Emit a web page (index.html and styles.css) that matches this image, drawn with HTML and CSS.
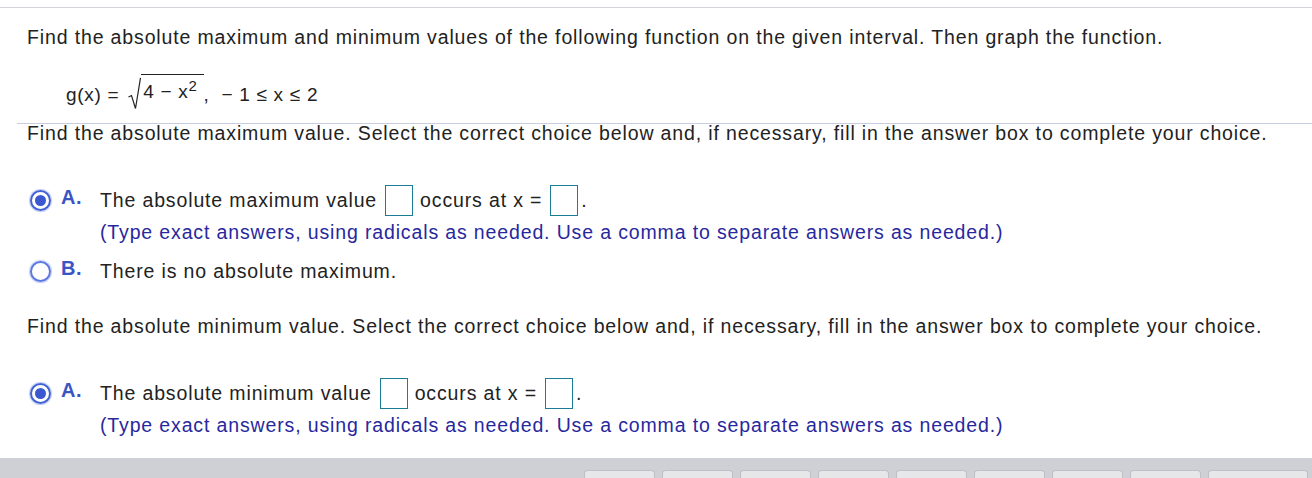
FILE: index.html
```html
<!DOCTYPE html>
<html>
<head>
<meta charset="utf-8">
<link rel="stylesheet" href="styles.css">
</head>
<body>
<div class="page">
  <div class="top-rule"></div>
  <p class="prompt">Find the absolute maximum and minimum values of the following function on the given interval. Then graph the function.</p>
  <div class="formula">g(x) =&nbsp;<svg class="radsign" width="13" height="33" viewBox="0 0 13 33"><path d="M0.5 20 L3.5 18.5 L7.5 31.5 L12.5 0.8" fill="none" stroke="#222" stroke-width="1.2"/></svg><span class="radicand">4 − x<sup>2</sup>&nbsp;</span>,&nbsp; − 1 ≤ x ≤ 2</div>
  <div class="part">
    <p class="instr">Find the absolute maximum value. Select the correct choice below and, if necessary, fill in the answer box to complete your choice.</p>
    <div class="choice first">
      <span class="radio checked"></span>
      <span class="label">A.</span>
      <span class="body">The absolute maximum value<span class="box"></span>occurs at x =<span class="box"></span>.</span>
    </div>
    <div class="hint">(Type exact answers, using radicals as needed. Use a comma to separate answers as needed.)</div>
    <div class="choice b">
      <span class="radio"></span>
      <span class="label">B.</span>
      <span class="body">There is no absolute maximum.</span>
    </div>
    <p class="instr second">Find the absolute minimum value. Select the correct choice below and, if necessary, fill in the answer box to complete your choice.</p>
    <div class="choice first">
      <span class="radio checked"></span>
      <span class="label">A.</span>
      <span class="body">The absolute minimum value<span class="box"></span>occurs at x =<span class="box"></span>.</span>
    </div>
    <div class="hint">(Type exact answers, using radicals as needed. Use a comma to separate answers as needed.)</div>
  </div>
  <div class="bottom-bar">
    <span class="tab"></span><span class="tab"></span><span class="tab"></span><span class="tab"></span><span class="tab"></span><span class="tab"></span><span class="tab"></span><span class="tab"></span><span class="tab wide"></span>
  </div>
</div>
</body>
</html>
```
FILE: styles.css
```css
html, body {
  margin: 0;
  padding: 0;
  background: #ffffff;
}
body {
  font-family: "Liberation Sans", Arial, sans-serif;
  color: #222222;
  width: 1312px;
  height: 478px;
  overflow: hidden;
}
.page {
  position: relative;
  box-sizing: border-box;
  height: 478px;
  padding-top: 7px;
}
.top-rule {
  height: 1px;
  background: #d4d4da;
}
.prompt {
  margin: 17px 0 0 27px;
  font-size: 19.5px;
  letter-spacing: 0.86px;
  line-height: 24px;
}
.formula {
  margin: 34px 0 0 66px;
  font-size: 19px;
  letter-spacing: 0.7px;
  line-height: 24px;
  height: 24px;
  display: flex;
  align-items: center;
  white-space: pre;
}
.radsign {
  display: block;
  margin-top: -4px;
  margin-left: 3px;
}
.radicand {
  display: inline-block;
  border-top: 1.2px solid #222;
  margin-top: -12px;
  padding-top: 5px;
  padding-left: 2px;
  line-height: 24px;
}
.radicand sup {
  font-size: 15px;
  vertical-align: 7px;
  line-height: 0;
}
.part {
  margin: 16px 0 0 17px;
  border-top: 1px solid #c8cde2;
}
.instr {
  margin: 0 0 0 10px;
  font-size: 19.5px;
  letter-spacing: 0.86px;
  line-height: 18px;
}
.instr.second {
  margin-top: 30px;
}
.choice {
  display: flex;
  align-items: center;
  height: 32px;
  font-size: 19.5px;
  letter-spacing: 0.86px;
}
.choice.first {
  margin-top: 42px;
}
.choice.b {
  margin-top: 7px;
}
.radio {
  box-sizing: border-box;
  width: 21px;
  height: 21px;
  margin-left: 13px;
  border: 2px solid #5a78e0;
  border-radius: 50%;
  box-shadow: 0 0 1px 1px rgba(120, 145, 230, 0.45);
  display: flex;
  align-items: center;
  justify-content: center;
  flex-shrink: 0;
}
.radio.checked {
  border-color: #4262d4;
}
.radio.checked::after {
  content: "";
  width: 11px;
  height: 11px;
  border-radius: 50%;
  background: #3a58cf;
}
.label {
  margin-left: 10px;
  width: 39px;
  font-size: 20px;
  letter-spacing: 0.5px;
  font-weight: bold;
  color: #3b54c4;
  align-self: flex-start;
  line-height: 26px;
}
.body {
  display: flex;
  align-items: center;
  white-space: pre;
}
.box {
  display: inline-block;
  box-sizing: border-box;
  width: 28px;
  height: 31px;
  border: 1.5px solid #1b7c96;
  margin: 0 7px 0 8px;
}
.box:last-child {
  margin-right: 3px;
}
.hint {
  margin: 0 0 0 83px;
  font-size: 19.5px;
  letter-spacing: 0.86px;
  line-height: 32px;
  color: #28289e;
}
.bottom-bar {
  position: absolute;
  left: 0;
  right: 0;
  top: 458px;
  height: 20px;
  background: #cfd0d6;
  display: flex;
  justify-content: flex-end;
  align-items: flex-end;
  gap: 7px;
  padding-right: 4px;
  box-sizing: border-box;
}
.tab {
  display: block;
  width: 71px;
  height: 8px;
  background: #e6e7e9;
  border: 1px solid #bfc0c5;
  border-bottom: none;
  border-radius: 4px 4px 0 0;
  box-sizing: border-box;
}
.tab.wide {
  width: 100px;
}
```
